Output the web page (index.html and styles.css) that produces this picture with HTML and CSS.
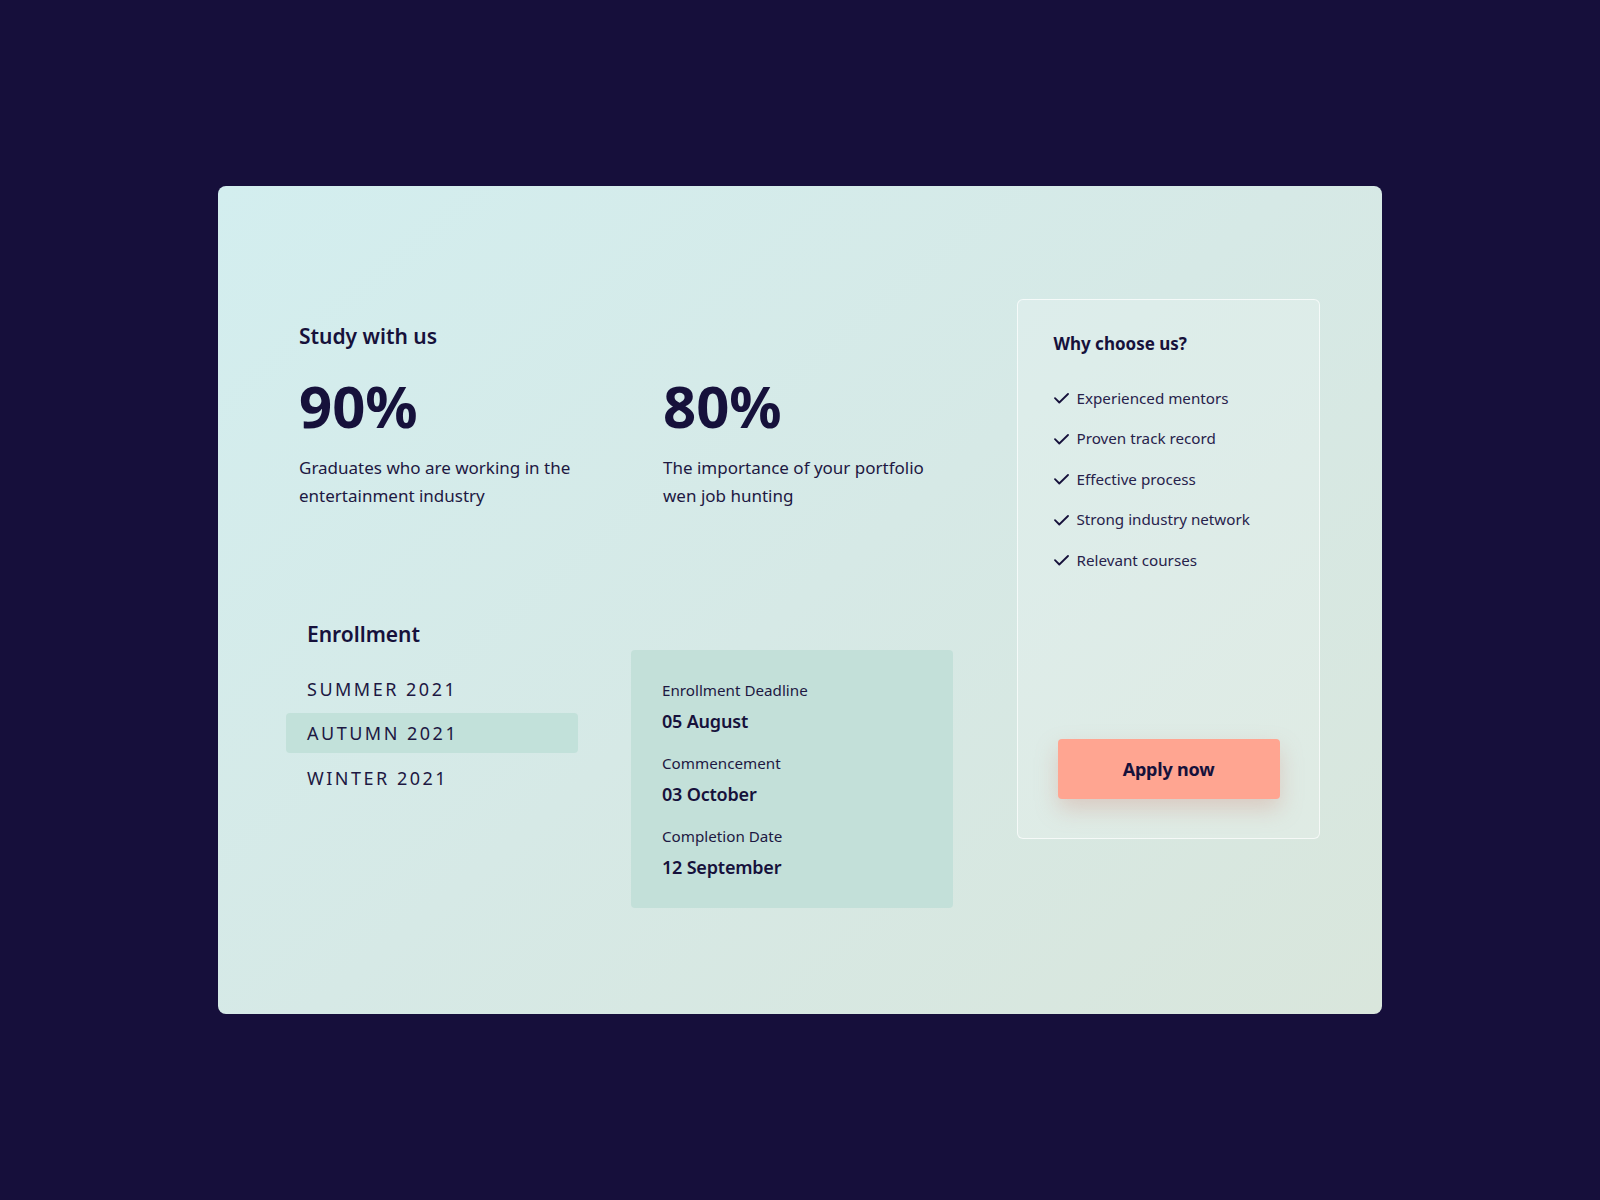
FILE: index.html
```html
<!DOCTYPE html>
<html lang="en">
<head>
<meta charset="utf-8">
<title>Study with us</title>
<link rel="stylesheet" href="styles.css">
</head>
<body>
<main class="card">
  <section class="main">
    <h2 class="title">Study with us</h2>
    <div class="stats">
      <div class="stat">
        <div class="stat-num">90%</div>
        <p class="stat-desc">Graduates who are working in the entertainment industry</p>
      </div>
      <div class="stat">
        <div class="stat-num">80%</div>
        <p class="stat-desc">The importance of your portfolio wen job hunting</p>
      </div>
    </div>
    <div class="enroll">
      <div class="terms">
        <h3 class="terms-title">Enrollment</h3>
        <ul class="term-list">
          <li class="term">SUMMER 2021</li>
          <li class="term term-active">AUTUMN 2021</li>
          <li class="term">WINTER 2021</li>
        </ul>
      </div>
      <dl class="dates">
        <div class="date-group">
          <dt class="date-label">Enrollment Deadline</dt>
          <dd class="date-value">05 August</dd>
        </div>
        <div class="date-group">
          <dt class="date-label">Commencement</dt>
          <dd class="date-value">03 October</dd>
        </div>
        <div class="date-group">
          <dt class="date-label">Completion Date</dt>
          <dd class="date-value">12 September</dd>
        </div>
      </dl>
    </div>
  </section>
  <aside class="why">
    <h3 class="why-title">Why choose us?</h3>
    <ul class="why-list">
      <li class="why-item"><svg class="check" viewBox="0 0 15 11" width="15" height="11"><path d="M1 5.2 L5.3 9.5 L14 1" fill="none" stroke="#16113b" stroke-width="1.8" stroke-linecap="round" stroke-linejoin="round"/></svg>Experienced mentors</li>
      <li class="why-item"><svg class="check" viewBox="0 0 15 11" width="15" height="11"><path d="M1 5.2 L5.3 9.5 L14 1" fill="none" stroke="#16113b" stroke-width="1.8" stroke-linecap="round" stroke-linejoin="round"/></svg>Proven track record</li>
      <li class="why-item"><svg class="check" viewBox="0 0 15 11" width="15" height="11"><path d="M1 5.2 L5.3 9.5 L14 1" fill="none" stroke="#16113b" stroke-width="1.8" stroke-linecap="round" stroke-linejoin="round"/></svg>Effective process</li>
      <li class="why-item"><svg class="check" viewBox="0 0 15 11" width="15" height="11"><path d="M1 5.2 L5.3 9.5 L14 1" fill="none" stroke="#16113b" stroke-width="1.8" stroke-linecap="round" stroke-linejoin="round"/></svg>Strong industry network</li>
      <li class="why-item"><svg class="check" viewBox="0 0 15 11" width="15" height="11"><path d="M1 5.2 L5.3 9.5 L14 1" fill="none" stroke="#16113b" stroke-width="1.8" stroke-linecap="round" stroke-linejoin="round"/></svg>Relevant courses</li>
    </ul>
    <button class="apply" type="button">Apply now</button>
  </aside>
</main>
</body>
</html>
```

FILE: styles.css
```css
* { box-sizing: border-box; }

html, body {
  margin: 0;
  padding: 0;
}

body {
  width: 1600px;
  height: 1200px;
  background: #160f3b;
  display: flex;
  align-items: center;
  justify-content: center;
  font-family: "Noto Sans", "Open Sans", sans-serif;
  color: #16113b;
}

.card {
  width: 1164px;
  height: 828px;
  border-radius: 8px;
  background: linear-gradient(140deg, #d3eeef 0%, #d6e9e6 50%, #d9e6dc 100%);
  display: flex;
  align-items: flex-start;
  padding: 113px 62px 0 81px;
}

.main {
  width: 654px;
  flex: none;
  padding-top: 23px;
}

.title {
  margin: 0;
  font-size: 21px;
  line-height: 28px;
  font-weight: 600;
}

.stats {
  display: flex;
  margin-top: 23.5px;
}

.stat {
  width: 364px;
  flex: none;
}

.stat + .stat {
  width: 290px;
}

.stat-num {
  font-size: 58px;
  line-height: 64px;
  font-weight: 700;
  letter-spacing: 0;
}

.stat-desc {
  margin: 16.5px 0 0;
  font-size: 17px;
  line-height: 28px;
  max-width: 285px;
  color: #1d1842;
}

.enroll {
  display: flex;
  align-items: flex-start;
  margin-top: 110px;
  margin-left: -13px;
}

.terms {
  width: 292px;
  flex: none;
}

.terms-title {
  margin: 0;
  padding-left: 21px;
  font-size: 21px;
  line-height: 28px;
  font-weight: 600;
}

.term-list {
  list-style: none;
  margin: 20.5px 0 0;
  padding: 0;
  display: flex;
  flex-direction: column;
  gap: 4.5px;
}

.term {
  height: 40px;
  line-height: 40px;
  padding-left: 21px;
  font-size: 18px;
  letter-spacing: 2.5px;
  border-radius: 4px;
  color: #1d1842;
}

.term-active {
  background: #c2e1da;
}

.dates {
  margin: 30px 0 0 53px;
  width: 322px;
  flex: none;
  background: #c3e0d9;
  border-radius: 4px;
  padding: 28px 30px 27px 31px;
}

.date-group + .date-group {
  margin-top: 16px;
}

.date-label {
  font-size: 15.2px;
  line-height: 24px;
  color: #1d1842;
}

.date-value {
  margin: 5px 0 0;
  font-size: 18px;
  line-height: 28px;
  font-weight: 600;
  letter-spacing: -0.2px;
}

.why {
  width: 303px;
  height: 540px;
  flex: none;
  margin-left: 64px;
  border: 1.5px solid rgba(255, 255, 255, 0.7);
  border-radius: 6px;
  background: rgba(255, 255, 255, 0.18);
  display: flex;
  flex-direction: column;
  padding: 31px 20px 0 35.5px;
}

.why-title {
  margin: 0;
  font-size: 17px;
  line-height: 26px;
  font-weight: 700;
}

.why-list {
  list-style: none;
  margin: 28.8px 0 0;
  padding: 0;
  display: flex;
  flex-direction: column;
  gap: 16.5px;
}

.why-item {
  display: flex;
  align-items: center;
  font-size: 15.2px;
  line-height: 24px;
  color: #27224b;
}

.check {
  flex: none;
  margin: 2px 8px 0 0;
}

.apply {
  margin-top: auto;
  margin-bottom: 39px;
  align-self: center;
  margin-left: -15.5px;
  width: 222px;
  height: 60px;
  border: none;
  border-radius: 4px;
  background: #ffa591;
  box-shadow: 0 10px 22px rgba(210, 140, 125, 0.35);
  font-family: "Noto Sans", "Open Sans", sans-serif;
  font-size: 18px;
  font-weight: 700;
  letter-spacing: -0.2px;
  color: #16113b;
}
```
